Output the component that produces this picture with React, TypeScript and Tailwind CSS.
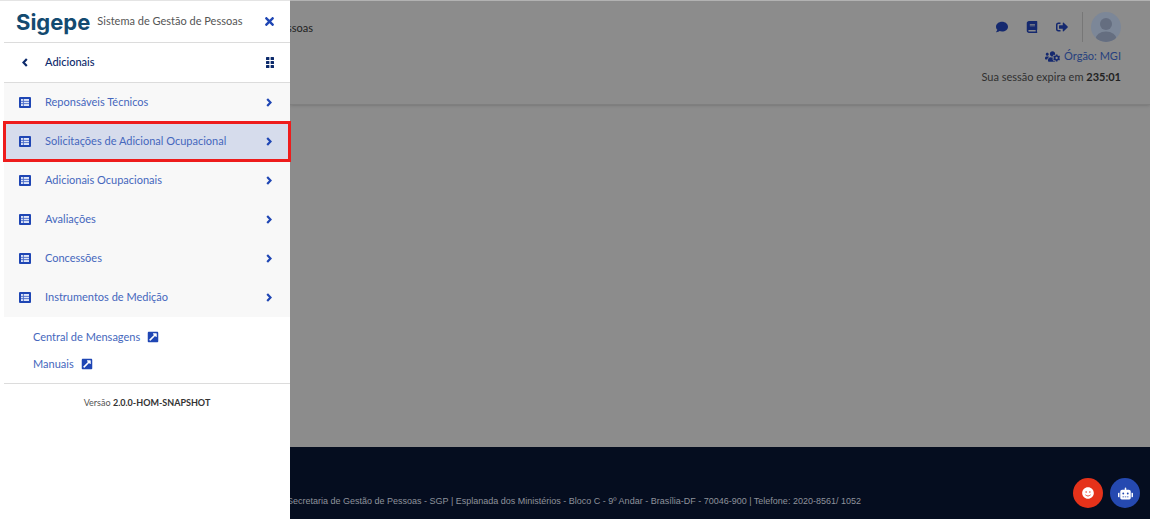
import { useState } from "react";
import {
  FaBook,
  FaComment,
  FaExternalLinkSquareAlt,
  FaRobot,
  FaSignOutAlt,
  FaSmile,
  FaTimes,
  FaUsersCog,
} from "react-icons/fa";

const menuItems = [
  "Reponsáveis Técnicos",
  "Solicitações de Adicional Ocupacional",
  "Adicionais Ocupacionais",
  "Avaliações",
  "Concessões",
  "Instrumentos de Medição",
];

const externalLinks = ["Central de Mensagens", "Manuais"];

function ListIcon() {
  return (
    <svg viewBox="0 0 12 11" className="mr-[14px] h-[11px] w-3 shrink-0" aria-hidden="true">
      <rect width="12" height="11" rx="1" fill="#1f46b4" />
      <rect x="2" y="2" width="8" height="7" fill="#dfe6f8" />
      <path d="M2 4.4h8M2 6.6h8M4.4 2v7" stroke="#4a6cc8" strokeWidth="0.9" />
    </svg>
  );
}

function Chevron({ left = false }: { left?: boolean }) {
  return (
    <svg viewBox="0 0 6 9" className="h-[9px] w-[6px]" fill="none" aria-hidden="true">
      <path
        d={left ? "M4.8 1.1 1.5 4.5l3.3 3.4" : "M1.2 1.1l3.3 3.4-3.3 3.4"}
        stroke="currentColor"
        strokeWidth="2.2"
      />
    </svg>
  );
}

function GridIcon() {
  return (
    <svg viewBox="0 0 8 11" className="h-[11px] w-2" fill="currentColor" aria-hidden="true">
      {[0, 4, 8].map((y) => (
        <g key={y}>
          <rect x="0" y={y} width="3.4" height="3" rx="0.5" />
          <rect x="4.6" y={y} width="3.4" height="3" rx="0.5" />
        </g>
      ))}
    </svg>
  );
}

function Sidebar() {
  const [selected, setSelected] = useState(menuItems[1]);

  return (
    <aside className="relative z-10 w-[290px] shrink-0 border-t border-[#e4e4e4] bg-white pl-1">
      <div className="flex h-[42px] items-center border-b border-[#dcdcdc] pr-[14px] pl-3">
        <span className="font-['Inter',sans-serif] text-[22px] leading-none font-bold text-[#134a70]">
          Sigepe
        </span>
        <span className="ml-[7px] text-[11px] whitespace-nowrap text-[#555]">
          Sistema de Gestão de Pessoas
        </span>
        <button type="button" aria-label="Fechar menu" className="ml-auto text-[#1f46b4]">
          <FaTimes size={13} />
        </button>
      </div>

      <div className="flex h-10 items-center border-b border-[#dcdcdc] px-4 text-[#0c2a6b]">
        <button type="button" aria-label="Voltar" className="flex w-[25px] pl-[2px]">
          <Chevron left />
        </button>
        <span className="text-[11px] font-medium">Adicionais</span>
        <button type="button" aria-label="Módulos" className="ml-auto">
          <GridIcon />
        </button>
      </div>

      <nav>
        {menuItems.map((item) => (
          <button
            key={item}
            type="button"
            onClick={() => setSelected(item)}
            className={`flex h-[39px] w-full items-center pr-[18px] pl-[15px] text-[11px] text-[#4567bd] ${
              item === selected
                ? "relative bg-[#d6dcec] outline-[3px] -outline-offset-2 outline-[#ee1c1c]"
                : "bg-[#f8f8f8]"
            }`}
          >
            <ListIcon />
            {item}
            <span className="ml-auto text-[#1f46b4]">
              <Chevron />
            </span>
          </button>
        ))}
      </nav>

      <div className="flex flex-col gap-[9px] border-b border-[#dcdcdc] pt-[11px] pb-[10px] pl-[29px]">
        {externalLinks.map((link) => (
          <a key={link} href="#" className="flex items-center gap-[7px] text-[11px] leading-[18px] text-[#4567bd]">
            {link}
            <FaExternalLinkSquareAlt size={12} className="text-[#1f46b4]" />
          </a>
        ))}
      </div>

      <p className="pt-3 text-center text-[9px] leading-[14px] text-[#555]">
        Versão <strong className="text-[#333]">2.0.0-HOM-SNAPSHOT</strong>
      </p>
    </aside>
  );
}

function Header() {
  return (
    <header className="flex h-[104px] items-start justify-between border-b border-[#7f7f7f] pt-[11px] pr-[29px] shadow-sm">
      <span className="-ml-[3px] pt-[7px] text-[11px] leading-[18px] text-[#222]">ssoas</span>
      <div className="flex flex-col items-end">
        <div className="flex h-[30px] items-center text-[#15296f]">
          <button type="button" aria-label="Mensagens">
            <FaComment size={12} />
          </button>
          <button type="button" aria-label="Manual" className="ml-[18px]">
            <FaBook size={12} />
          </button>
          <button type="button" aria-label="Sair" className="ml-[18px]">
            <FaSignOutAlt size={12} />
          </button>
          <span className="ml-[14px] h-full w-px bg-[#777]" />
          <svg viewBox="0 0 30 30" className="ml-2 h-[30px] w-[30px]" role="img" aria-label="Usuário">
            <clipPath id="avatar">
              <circle cx="15" cy="15" r="15" />
            </clipPath>
            <g clipPath="url(#avatar)">
              <rect width="30" height="30" fill="#7c8798" />
              <circle cx="15" cy="12" r="6" fill="#656e80" />
              <ellipse cx="15" cy="27" rx="10.5" ry="7.5" fill="#656e80" />
            </g>
          </svg>
        </div>
        <a href="#" className="mt-[5px] flex items-center gap-1 text-[11px] leading-[18px] text-[#263f7e]">
          <FaUsersCog size={15} className="text-[#15296f]" />
          Órgão: MGI
        </a>
        <p className="mt-[3px] text-[11px] leading-[18px] text-[#303030]">
          Sua sessão expira em <strong className="text-[#222]">235:01</strong>
        </p>
      </div>
    </header>
  );
}

function Footer() {
  return (
    <footer className="flex h-[72px] items-end justify-between bg-[#050d1f] pr-[10px] pb-[11px]">
      <p className="-ml-[3px] font-['Liberation_Sans',sans-serif] text-[9px] leading-[13px] whitespace-nowrap text-[#8e929b]">
        Secretaria de Gestão de Pessoas - SGP | Esplanada dos Ministérios - Bloco C - 9º Andar -
        Brasília-DF - 70046-900 | Telefone: 2020-8561/ 1052
      </p>
      <div className="flex gap-[7px] text-white">
        <button
          type="button"
          aria-label="Avaliar"
          className="flex h-[30px] w-[30px] items-center justify-center rounded-full bg-[#e5321a]"
        >
          <FaSmile size={12} />
        </button>
        <button
          type="button"
          aria-label="Assistente virtual"
          className="flex h-[30px] w-[30px] items-center justify-center rounded-full bg-[#2549b0]"
        >
          <FaRobot size={15} />
        </button>
      </div>
    </footer>
  );
}

export default function App() {
  return (
    <div className="flex min-h-screen bg-white font-[Lato,sans-serif]">
      <Sidebar />
      <div className="flex min-w-0 flex-1 flex-col border-t border-[#b5b5b5] pb-[6px]">
        <div className="flex flex-1 flex-col bg-[#8c8c8c]">
          <Header />
          <main className="flex-1" />
          <Footer />
        </div>
      </div>
    </div>
  );
}
